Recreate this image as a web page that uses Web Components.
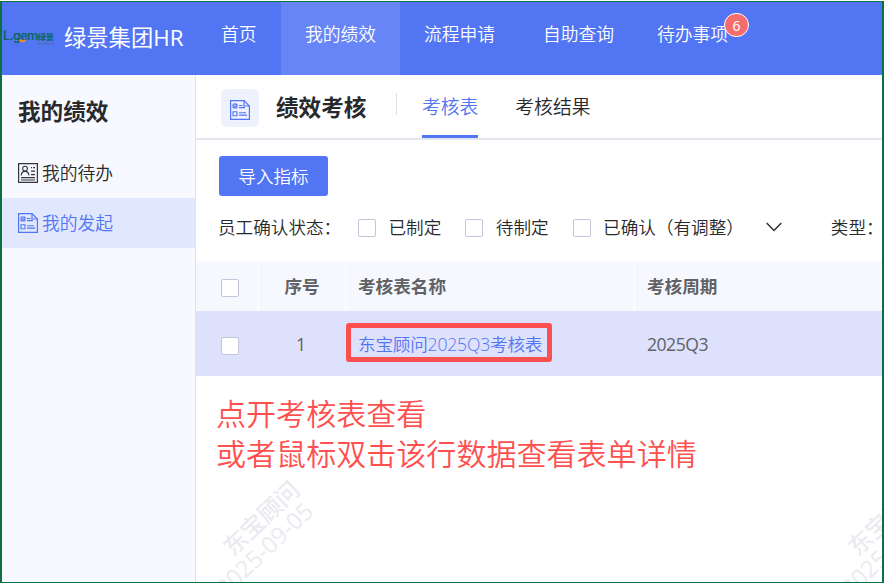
<!DOCTYPE html>
<html lang="zh-CN">
<head>
<meta charset="utf-8">
<title>绩效考核</title>
<style>
html,body{margin:0;height:100%;overflow:hidden;background:#fff}
body{font-family:"Noto Sans","Noto Sans CJK SC",sans-serif;font-size:17.6px;color:#28292c}
</style>
</head>
<body>
<hr-app></hr-app>
<script>
const define = (name, html) => {
  const t = document.createElement('template');
  t.innerHTML = html;
  customElements.define(name, class extends HTMLElement {
    constructor() {
      super();
      this.attachShadow({ mode: 'open' }).appendChild(t.content.cloneNode(true));
    }
  });
};
const CJK = 'font-family:"Noto Sans CJK SC",sans-serif;';

define('brand-logo', `<style>
:host{display:block;width:51px;height:18px;flex:none}
svg{display:block}
</style>
<svg width="51" height="18" viewBox="0 0 51 18">
<g fill="#0b665f">
<text x="0" y="10.3" font-size="12.5" font-family="Inter,sans-serif" font-weight="600" letter-spacing="-.55">L.gem</text>
<text x="34.6" y="9.8" font-size="8.2" font-weight="700" font-family="Noto Sans CJK SC,sans-serif">绿景</text></g>
<path d="M16.5 10q3 2.8 6 0" stroke="#f08a24" stroke-width="2" fill="none"/>
<g fill="#4c68ab"><path d="M35 12.4h3v2.4h-3zM39.3 12.4h3v2.4h-3zM43.6 12.4h3v2.4h-3zM47.9 12.4h3v2.4h-3z" opacity=".75"/></g>
</svg>`);

define('form-icon', `<style>:host{display:block;width:20px;height:20px;flex:none}svg{display:block}</style>
<svg width="20" height="20" viewBox="0 0 20 20" fill="none" stroke="#5275f3">
<path d="M14 .6H.6v18.8h18.8V6z" stroke-width="1.2"/><path d="M14 .6V6h5.4" stroke-width="1.2"/>
<path d="M3 4h4v4H3z" fill="#a9bafa"/><path d="M3.6 6l1.2 1.3L7 4.2" stroke-width=".8"/>
<path d="M3 11.8h4v4H3z" stroke-width="1.1"/>
<path d="M9 5.5h3.5M9 7.6h6M9 12.8h7M9 15.1h8" stroke-width="1.1"/>
</svg>`);

define('person-icon', `<style>:host{display:block;width:20px;height:20px;flex:none}svg{display:block}</style>
<svg width="20" height="20" viewBox="0 0 20 20" fill="none" stroke="#35373b">
<path d="M.6.7h18.8v18.7H.6z" stroke-width="1.2"/><circle cx="7" cy="5.6" r="2.4" stroke-width="1.1"/>
<path d="M3.2 12.4c.2-5.5 7.4-5.5 7.7 0M13 4.6h1M15 4.6h2M13 8.2h4M13 11.7h4M3 14.6h14M3 17h14" stroke-width="1.2"/>
</svg>`);

define('nav-item', `<style>
:host{display:block;position:relative;box-sizing:border-box;height:73px;padding:18px 24px 0;${CJK}color:#fff;font-size:17.8px;line-height:26px;font-weight:350;white-space:nowrap}
:host([active]){background:#6785f6}
</style><slot></slot>`);

define('count-badge', `<style>
:host{position:absolute;left:86px;top:11px;box-sizing:border-box;width:25px;height:24px;border:1px solid #fff;border-radius:12px;background:#f56c6c;color:#fff;font:14px/24px "Noto Sans",sans-serif;text-align:center}
</style><slot></slot>`);

define('top-bar', `<style>
:host{display:flex;height:73px;background:#5275f3;color:#fff;flex:none}
brand-logo{margin:28px 0 0 1px}
h1{margin:18px 0 0 10px;width:133px;font:400 22.3px/36px "Open Sans","Noto Sans CJK SC",sans-serif;white-space:nowrap}
nav{display:flex;margin-left:-1px}
nav-item{width:119px}
nav-item:first-child{width:85px;padding-left:25px}
nav-item:last-child{width:130px;padding-left:19px}
</style>
<brand-logo></brand-logo><h1>绿景集团HR</h1>
<nav><nav-item>首页</nav-item><nav-item active>我的绩效</nav-item><nav-item>流程申请</nav-item><nav-item>自助查询</nav-item><nav-item>待办事项<count-badge>6</count-badge></nav-item></nav>`);

define('side-item', `<style>
:host{display:flex;align-items:center;gap:4px;height:50px;padding-left:16px;font-size:17.8px;font-weight:350;${CJK}white-space:nowrap}
:host([active]){background:#e1e8fe;color:#5275f3}
span{padding-bottom:2px}
</style><slot name="icon"></slot><span><slot></slot></span>`);

define('side-bar', `<style>
:host{display:block;box-sizing:border-box;width:194px;flex:none;background:#f7f9fe;border-right:1px solid #e0e3ea}
h2{margin:0;padding:18px 0 0 16px;height:55px;${CJK}font-size:22.6px;line-height:36px;font-weight:700}
</style><h2>我的绩效</h2>
<side-item><person-icon slot="icon"></person-icon>我的待办</side-item>
<side-item active><form-icon slot="icon"></form-icon>我的发起</side-item>`);

define('tab-item', `<style>
:host{display:block;box-sizing:border-box;height:63px;padding-top:17px;${CJK}font-size:18.8px;font-weight:350;line-height:28px;white-space:nowrap}
:host([active]){color:#5275f3;border-bottom:3px solid #5275f3}
</style><slot></slot>`);

define('page-head', `<style>
:host{display:flex;height:63px;border-bottom:2px solid #e4e7ed;padding-left:25px}
.box{display:grid;place-items:center;width:38px;height:38px;margin-top:14px;border-radius:5px;background:#eef2fe}
form-icon{transform:translateY(2px)}
h2{margin:14px 0 0 17px;width:120px;${CJK}font-size:22.6px;line-height:36px;font-weight:700;white-space:nowrap}
i{width:1px;height:22px;background:#dcdfe6;margin:18px 25px 0 0}
tab-item+tab-item{margin-left:37px}
</style><div class="box"><form-icon></form-icon></div><h2>绩效考核</h2><i></i><tab-item active>考核表</tab-item><tab-item>考核结果</tab-item>`);

define('check-box', `<style>
:host{display:block;box-sizing:border-box;width:18px;height:18px;border:1px solid #c0c6d9;border-radius:2px;background:#fff;flex:none}
</style>`);

define('primary-button', `<style>
:host{display:block;width:109px;height:40px;border-radius:3px;background:#5275f3;color:#fff;text-align:center;${CJK}font-size:17.6px;line-height:40px;font-weight:350}
</style><slot></slot>`);

define('filter-bar', `<style>
:host{display:flex;align-items:center;height:26px;${CJK}font-size:17.6px;line-height:26px;font-weight:350;white-space:nowrap;overflow:hidden}
.l{width:140px;flex:none}
div,span{flex:none}
span{margin-left:12.5px}
span+check-box{margin-left:24px}
check-box{transform:translateY(1px)}
svg{margin:0 49px 0 22px;flex:none}
</style><div class="l">员工确认状态：</div><check-box></check-box><span>已制定</span><check-box></check-box><span>待制定</span><check-box></check-box><span>已确认（有调整）</span>
<svg width="16" height="10" viewBox="0 0 16 10" fill="none" stroke="#303133" stroke-width="1.5"><path d="M.7 1L8 8.5 15.3 1"/></svg><div>类型：</div>`);

define('data-table', `<style>
:host{display:block}
.r{display:grid;grid-template-columns:63px 87px 289px 1fr;align-items:stretch}
.r>div{display:flex;align-items:center;box-sizing:border-box;white-space:nowrap}
.r>div:nth-child(1){padding-left:25px}
.r>div:nth-child(2){justify-content:center}
.r>div:nth-child(n+3){padding-left:12px}
.h{height:50px;background:#f7f8fd;color:#606266;font-weight:700;${CJK}}
.h>div:not(:last-child){border-right:1px solid #fff}
.h>div:nth-child(n+2){padding-bottom:1px}
.h check-box{transform:translateY(2px)}
.b{height:65px;background:#dde1fc;color:#606266;font:350 17.6px "Open Sans","Noto Sans CJK SC",sans-serif}
.b check-box{transform:translateY(2px)}
.b>div:nth-child(2){padding-right:3px;font-weight:400}
.b>div:nth-child(4){letter-spacing:-.5px;font-weight:400}
.k{color:#5275f3;position:relative;letter-spacing:-.2px}
.k b{position:absolute;left:0;top:12px;box-sizing:border-box;width:206px;height:39px;border:5px solid #fc5050;border-radius:3px}
</style>
<div class="r h"><div><check-box></check-box></div><div>序号</div><div>考核表名称</div><div>考核周期</div></div>
<div class="r b"><div><check-box></check-box></div><div>1</div><div class="k"><span>东宝顾问2025Q3考核表</span><b></b></div><div>2025Q3</div></div>`);

define('hint-note', `<style>
:host{display:block;color:#ff5050;${CJK}font-size:30.05px;font-weight:350;line-height:40px;white-space:nowrap}
</style><slot></slot>`);

/* Each stamp is a pair of slanted lines centred on the host's own origin. */
define('water-mark', `<style>
:host{position:absolute;width:0;height:0;font:500 23.6px/30px "Open Sans","Noto Sans CJK SC",sans-serif;color:#e9ebf1;white-space:nowrap;pointer-events:none}
span{position:absolute;left:0;top:0;transform:translate(-50%,-50%) rotate(-43.5deg)}
span+span{left:3px;top:31px}
</style><span>东宝顾问</span><span>2025-09-05</span>`);

define('hr-app', `<style>
:host{display:flex;flex-direction:column;box-sizing:border-box;width:884px;height:582px;margin-top:1px;border:solid #0b7044;border-width:1px 2px;overflow:hidden;position:relative}
.main{display:flex;flex:1;min-height:0}
main{flex:1;min-width:0;position:relative;overflow:hidden}
primary-button{margin:16px 0 0 23px}
filter-bar{margin:18px 0 21px 22px}
hint-note{margin:16px 0 0 20px}
</style><top-bar></top-bar><div class="main"><side-bar></side-bar><main>
<page-head></page-head><primary-button>导入指标</primary-button><filter-bar></filter-bar><data-table></data-table>
<hint-note>点开考核表查看<br>或者鼠标双击该行数据查看表单详情</hint-note>
<water-mark style="left:65px;top:443px"></water-mark><water-mark style="left:690px;top:443px"></water-mark>
</main></div>`);
</script>
</body>
</html>
